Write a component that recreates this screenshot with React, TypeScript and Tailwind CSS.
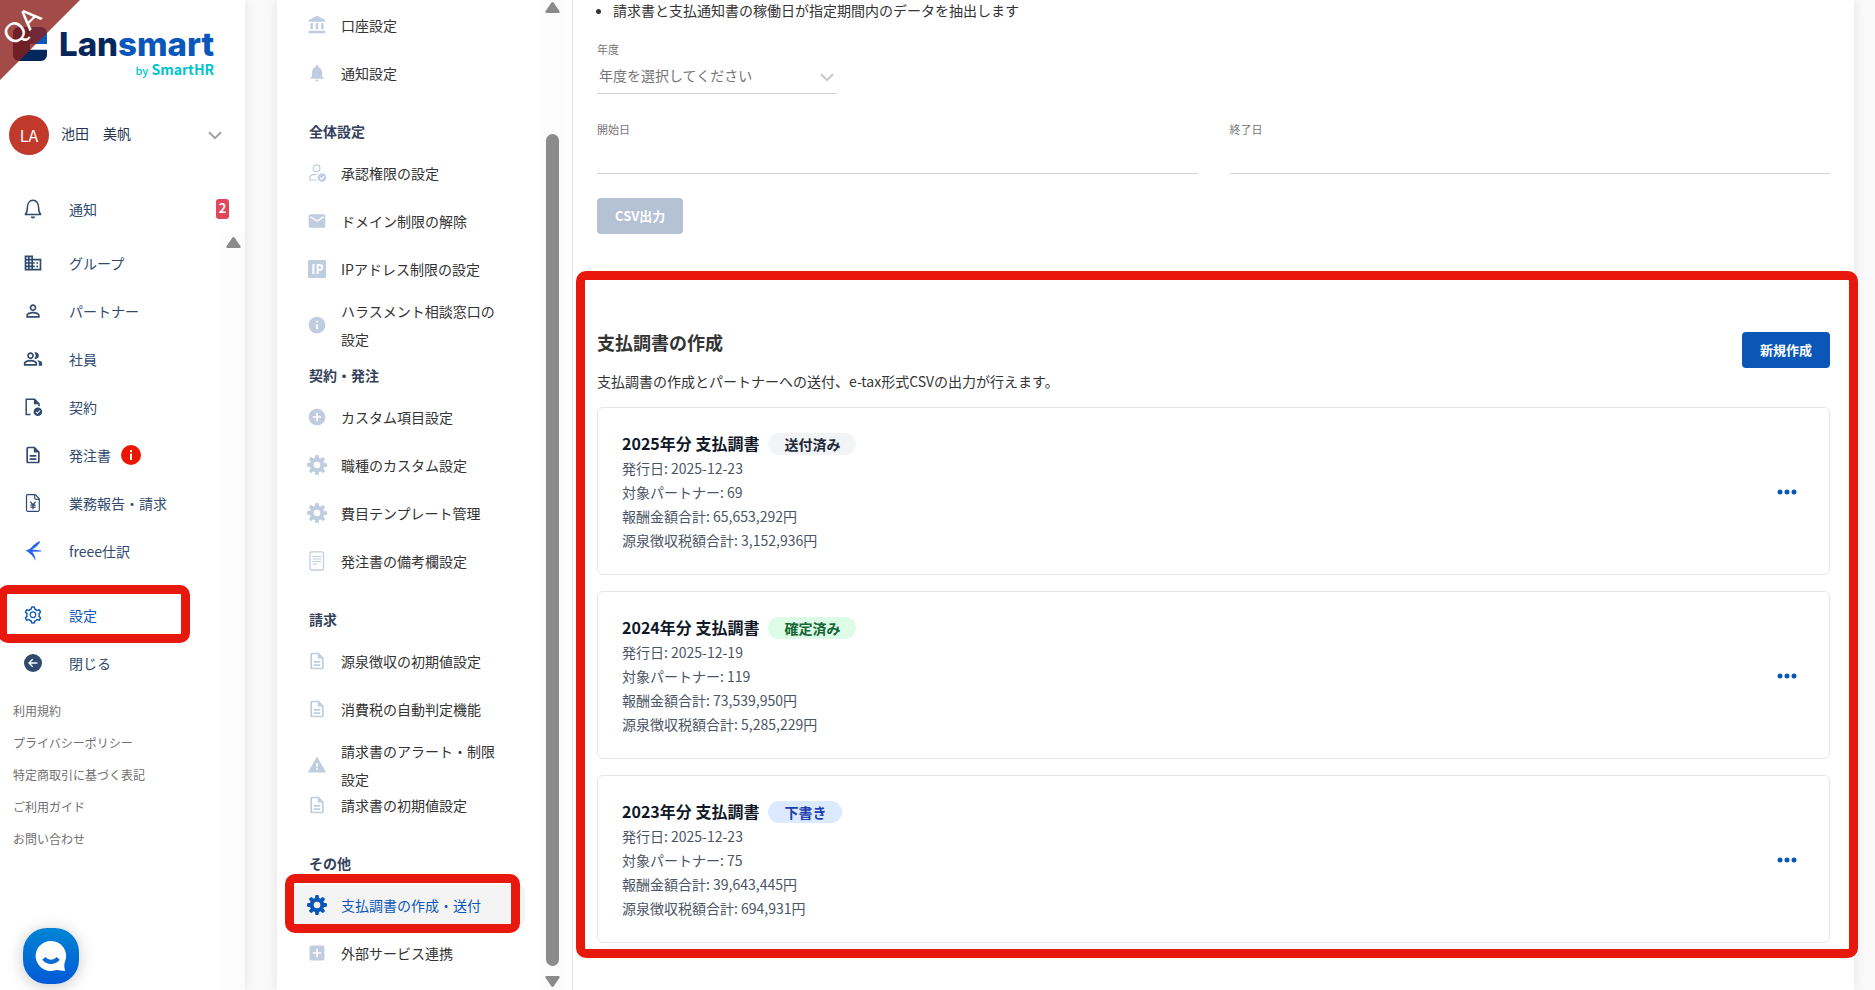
import type { ReactNode } from "react";
import {
  MdAccountBalance,
  MdAddBox,
  MdAddCircle,
  MdDomain,
  MdEmail,
  MdInfo,
  MdNotifications,
  MdOutlineDescription,
  MdOutlinePeopleAlt,
  MdPersonOutline,
  MdWarning,
} from "react-icons/md";
import { AiOutlineSetting } from "react-icons/ai";

/* ---------- icons ---------- */

const BellIcon = () => (
  <svg width="18" height="20" viewBox="0 0 18 20" fill="none">
    <path
      d="M1.3 15.4h15.4C14.8 13.4 14.6 12 14.6 8.4 14.6 3.9 12.2 1.3 9 1.3S3.4 3.9 3.4 8.4c0 3.6-.2 5-2.1 7z"
      stroke="currentColor"
      strokeWidth="1.5"
      strokeLinejoin="round"
    />
    <path d="M6.8 17.4h4.4a2.2 2.1 0 0 1-4.4 0z" fill="currentColor" />
  </svg>
);

const ContractIcon = () => (
  <svg width="20" height="20" viewBox="0 0 20 20" fill="none">
    <path d="M7.6 17.6H3.2V2.2h8.3l4.5 4.6v2.4" stroke="currentColor" strokeWidth="1.5" />
    <path d="M10.9 1.5v5.8h5.8z" fill="currentColor" />
    <circle cx="14.9" cy="14.7" r="4.3" fill="currentColor" />
    <path d="m12.9 14.8 1.5 1.5 2.6-2.8" stroke="#fff" strokeWidth="1.1" />
  </svg>
);

const YenDocIcon = () => (
  <svg width="20" height="20" viewBox="0 0 20 20" fill="none" stroke="currentColor">
    <path d="M4.7 1.7h7.6l4 4.1v11.3a1.2 1.2 0 0 1-1.2 1.2H4.7a1.2 1.2 0 0 1-1.2-1.2V2.9a1.2 1.2 0 0 1 1.2-1.2z" strokeWidth="1.2" />
    <path d="M11.7 1.9v2.9c0 .9.6 1.5 1.5 1.5h3" strokeWidth="1.2" />
    <path d="M7.4 8.6 10 12l2.6-3.4M10 12v4.2M7.4 12.2h5.2M7.4 14.2h5.2" strokeWidth="1.3" />
  </svg>
);

const SwallowIcon = () => (
  <svg width="20" height="22" viewBox="0 0 20 22" fill="#2864f0">
    <path d="M2.500 10.200C6 9.800 7.500 8.600 9 6.800 11 4.300 14 2.200 17.300 1c-.4 2.800-4.200 6.300-8.300 8.500l9.200.9-.2 1.100-8.800.2c1.900 2.700 3.500 5.800 3.300 9.100C10.800 17 7.600 13.200 2.500 10.200z" />
  </svg>
);

const CloseIcon = () => (
  <svg width="18" height="18" viewBox="0 0 18 18" fill="none">
    <circle cx="9" cy="9" r="9" fill="currentColor" />
    <path d="M13.400 9H5.200M8.700 5.300 5 9l3.700 3.700" stroke="#fff" strokeWidth="1.400" />
  </svg>
);

const GearIcon = () => (
  <svg width="20" height="20" viewBox="0 0 20 20" fill="none">
    <circle cx="10" cy="10" r="5.300" stroke="currentColor" strokeWidth="4" />
    {[0, 45, 90, 135].map((angle) => (
      <g key={angle} transform={`rotate(${angle} 10 10)`} fill="currentColor">
        <rect x="8.100" y="0" width="3.800" height="4.500" rx="1.300" />
        <rect x="8.100" y="15.500" width="3.800" height="4.500" rx="1.300" />
      </g>
    ))}
  </svg>
);

const ApproverIcon = () => (
  <svg width="20" height="20" viewBox="0 0 20 20" fill="none">
    <circle cx="9.500" cy="5.300" r="3.400" stroke="currentColor" strokeWidth="1.200" />
    <path d="M9.600 17H2.700v-1.800c0-2.500 3-3.800 6.800-3.800" stroke="currentColor" strokeWidth="1.200" />
    <circle cx="15" cy="14.500" r="4.300" fill="currentColor" />
    <path d="m13.100 14.600 1.500 1.500 2.500-2.900" stroke="#fff" strokeWidth="1.100" />
  </svg>
);

const IpIcon = () => (
  <svg width="18" height="18" viewBox="0 0 18 18">
    <rect width="18" height="18" rx="1.500" fill="currentColor" />
    <rect x="4.400" y="4" width="2" height="10" fill="#fff" />
    <path d="M9.600 14V5h2.200a2.300 2.300 0 0 1 0 4.900H9.600" fill="none" stroke="#fff" strokeWidth="1.900" />
  </svg>
);

const NoteIcon = () => (
  <svg width="16" height="20" viewBox="0 0 16 20" fill="none" stroke="currentColor">
    <rect x="1" y=".8" width="13.500" height="18.200" rx="1.600" strokeWidth="1.300" />
    <path d="M3.600 5.500h8.600M3.600 8h8.600M3.600 10.500h8.600M3.600 13h4.600" strokeWidth="1.100" />
  </svg>
);

const Chevron = ({ className }: { className: string }) => (
  <svg width="14" height="9" viewBox="0 0 14 9" fill="none" className={className}>
    <path d="m1 1.200 6 6 6-6" stroke="currentColor" strokeWidth="2" />
  </svg>
);

const UpArrow = () => (
  <svg width="15" height="11" viewBox="0 0 15 11" fill="#8b8b8b">
    <path d="M6.300.8a1.500 1.500 0 0 1 2.400 0l5.700 8.300c.6.900.1 1.900-1 1.900H1.600c-1.100 0-1.600-1-1-1.900z" />
  </svg>
);

const LogoMark = () => (
  <svg width="34" height="34" viewBox="0 0 34 34">
    <path d="M6 0h22a6 6 0 0 1 6 6v11H17V0z" fill="#0a57bb" />
    <path d="M6 0h11v22.700h17V28a6 6 0 0 1-6 6H6a6 6 0 0 1-6-6V6a6 6 0 0 1 6-6z" fill="#04285c" />
  </svg>
);

const ChatIcon = () => (
  <svg width="32" height="32" viewBox="0 0 32 32">
    <path d="M16 1a15 15 0 1 0 4.500 29.200c2.500-.9 5.600.7 9.700.7-.6-2.600-1.400-4.700-.5-8.400A15 15 0 0 0 16 1z" fill="#fff" />
    <path d="M8.800 18.300c4.200 4.800 10.200 4.800 14.400 0" fill="none" stroke="#0a6cd6" strokeWidth="4.200" />
  </svg>
);

/* ---------- data ---------- */

const mainNav: { label: string; icon: ReactNode; alert?: boolean }[] = [
  { label: "グループ", icon: <MdDomain size={20} /> },
  { label: "パートナー", icon: <MdPersonOutline size={20} /> },
  { label: "社員", icon: <MdOutlinePeopleAlt size={20} /> },
  { label: "契約", icon: <ContractIcon /> },
  { label: "発注書", icon: <MdOutlineDescription size={20} />, alert: true },
  { label: "業務報告・請求", icon: <YenDocIcon /> },
  { label: "freee仕訳", icon: <SwallowIcon /> },
];

const footerLinks = [
  "利用規約",
  "プライバシーポリシー",
  "特定商取引に基づく表記",
  "ご利用ガイド",
  "お問い合わせ",
];

const settingGroups: { title?: string; items: { label: string; icon: ReactNode; active?: boolean }[] }[] = [
  {
    items: [
      { label: "口座設定", icon: <MdAccountBalance size={20} /> },
      { label: "通知設定", icon: <MdNotifications size={20} /> },
    ],
  },
  {
    title: "全体設定",
    items: [
      { label: "承認権限の設定", icon: <ApproverIcon /> },
      { label: "ドメイン制限の解除", icon: <MdEmail size={20} /> },
      { label: "IPアドレス制限の設定", icon: <IpIcon /> },
      { label: "ハラスメント相談窓口の設定", icon: <MdInfo size={20} /> },
    ],
  },
  {
    title: "契約・発注",
    items: [
      { label: "カスタム項目設定", icon: <MdAddCircle size={20} /> },
      { label: "職種のカスタム設定", icon: <GearIcon /> },
      { label: "費目テンプレート管理", icon: <GearIcon /> },
      { label: "発注書の備考欄設定", icon: <NoteIcon /> },
    ],
  },
  {
    title: "請求",
    items: [
      { label: "源泉徴収の初期値設定", icon: <MdOutlineDescription size={20} /> },
      { label: "消費税の自動判定機能", icon: <MdOutlineDescription size={20} /> },
      { label: "請求書のアラート・制限設定", icon: <MdWarning size={20} /> },
      { label: "請求書の初期値設定", icon: <MdOutlineDescription size={20} /> },
    ],
  },
  {
    title: "その他",
    items: [
      { label: "支払調書の作成・送付", icon: <GearIcon />, active: true },
      { label: "外部サービス連携", icon: <MdAddBox size={20} /> },
    ],
  },
];

const reports = [
  {
    year: "2025",
    status: "送付済み",
    tone: "bg-gray-100 text-gray-800",
    issued: "2025-12-23",
    partners: "69",
    total: "65,653,292",
    tax: "3,152,936",
  },
  {
    year: "2024",
    status: "確定済み",
    tone: "bg-[#dcfce7] text-[#166534]",
    issued: "2025-12-19",
    partners: "119",
    total: "73,539,950",
    tax: "5,285,229",
  },
  {
    year: "2023",
    status: "下書き",
    tone: "bg-[#dbeafe] text-[#1e40af]",
    issued: "2025-12-23",
    partners: "75",
    total: "39,643,445",
    tax: "694,931",
  },
];

/* ---------- parts ---------- */

const Frame = ({ className }: { className: string }) => (
  <div aria-hidden="true" className={`pointer-events-none absolute z-10 rounded-[10px] border-[#e8180c] ${className}`} />
);

const NavLink = ({ icon, children, className }: { icon: ReactNode; children: ReactNode; className?: string }) => (
  <a href="#" className={`flex h-12 items-center gap-[26px] pl-[23px] ${className ?? ""}`}>
    <span className="flex w-5 justify-center">{icon}</span>
    <span className="flex items-center gap-[10px]">{children}</span>
  </a>
);

function Sidebar() {
  return (
    <aside className="relative flex w-[245px] shrink-0 flex-col bg-white text-sm text-[#2f4a6e] shadow-[0_0_12px_rgba(0,0,0,0.10)]">
      <div className="pointer-events-none absolute top-0 left-0 z-10 h-20 w-20 bg-[#8b1e1a]/80 [clip-path:polygon(0_0,100%_0,0_100%)]">
        <span className="absolute top-3 left-0 w-11 -rotate-45 text-center font-['Liberation_Sans',sans-serif] text-[28px] leading-7 text-white">
          QA
        </span>
      </div>

      <div className="flex h-[82px] items-start gap-3 pt-[27px] pl-[13px]">
        <LogoMark />
        <div className="flex flex-col items-end">
          <span className="font-['Inter',sans-serif] text-[33px] leading-[34px] font-extrabold text-[#04285c]">
            Lan<span className="text-[#0a57bb]">smart</span>
          </span>
          <span className="text-sm leading-4 font-bold text-[#00c4cc]">
            <span className="text-[11px] font-medium">by</span> SmartHR
          </span>
        </div>
      </div>

      <button type="button" className="mt-[33px] flex h-10 items-center pr-[23px] pl-[9px] text-[#24364f]">
        <span className="flex h-10 w-10 items-center justify-center rounded-full bg-[#c0392b] text-base text-white">LA</span>
        <span className="ml-3 flex-1 pb-1 text-left">池田　美帆</span>
        <Chevron className="text-[#a0a0a0]" />
      </button>

      <div className="mt-[30px] flex h-[47px] items-center pr-4">
        <NavLink icon={<BellIcon />} className="flex-1">
          通知
        </NavLink>
        <span className="flex h-5 w-[13px] items-center justify-center rounded-[3px] bg-[#e0475a] text-[13px] font-bold text-white">2</span>
      </div>

      <div className="flex min-h-0 flex-1">
        <nav className="min-w-0 flex-1 pt-[7px]">
          {mainNav.map((item) => (
            <NavLink key={item.label} icon={item.icon}>
              {item.label}
              {item.alert && (
                <svg width="20" height="20" viewBox="0 0 20 20">
                  <circle cx="10" cy="10" r="10" fill="#ec1500" />
                  <path d="M9 5h2v2H9zM9 8.500h2V15H9z" fill="#fff" />
                </svg>
              )}
            </NavLink>
          ))}
          <div className="relative mt-4">
            <NavLink icon={<AiOutlineSetting size={20} />} className="text-[#0a57b8]">
              設定
            </NavLink>
            <Frame className="-top-[6px] right-8 -bottom-1 -left-[2px] border-[9px]" />
          </div>
          <NavLink icon={<CloseIcon />}>閉じる</NavLink>
          <ul className="pt-2 pl-[13px] text-xs text-[#6f6f6f]">
            {footerLinks.map((label) => (
              <li key={label} className="flex h-8 items-center">
                <a href="#">{label}</a>
              </li>
            ))}
          </ul>
        </nav>
        <div className="flex w-[23px] justify-center bg-[#fcfcfc] pt-[5px]">
          <UpArrow />
        </div>
      </div>

      <button
        type="button"
        aria-label="チャット"
        className="absolute bottom-[6px] left-[23px] flex h-14 w-14 items-center justify-center rounded-3xl bg-linear-to-b from-[#0084d4] to-[#0059d6] shadow-[0_2px_16px_rgba(0,0,0,0.22)]"
      >
        <ChatIcon />
      </button>
    </aside>
  );
}

function SettingsNav() {
  return (
    <>
      <nav className="w-[264px] shrink-0 px-4 pt-px text-sm leading-7 text-[#333]">
        {settingGroups.map((group) => (
          <section key={group.title ?? "top"}>
            {group.title && <h3 className="pt-5 pb-1 pl-4 font-bold text-[#33425a]">{group.title}</h3>}
            <ul>
              {group.items.map((item) => (
                <li key={item.label} className="relative h-12 pt-1">
                  <a
                    href="#"
                    className={`flex min-h-10 items-center gap-[14px] rounded-md pl-[14px] ${
                      item.active ? "bg-[#f4f4f4] text-[#0a57b8]" : ""
                    }`}
                  >
                    <span className={`flex w-5 shrink-0 justify-center ${item.active ? "" : "text-[#c0cde0]"}`}>{item.icon}</span>
                    <span className="w-40">{item.label}</span>
                  </a>
                  {item.active && <Frame className="-top-[7px] right-[5px] -bottom-1 -left-2 border-[9px]" />}
                </li>
              ))}
            </ul>
          </section>
        ))}
      </nav>
      <div aria-hidden="true" className="mr-2 flex w-[23px] shrink-0 flex-col items-center bg-[#fcfcfc] pt-[2px] pb-[3px]">
        <UpArrow />
        <div className="mt-[121px] mb-[10px] w-[13px] flex-1 rounded-full bg-[#8b8b8b]" />
        <div className="rotate-180">
          <UpArrow />
        </div>
      </div>
    </>
  );
}

const DateField = ({ id, label }: { id: string; label: string }) => (
  <div className="flex flex-1 flex-col">
    <label htmlFor={id} className="text-[11px] leading-4 text-[#757575]">
      {label}
    </label>
    <input id={id} type="text" className="h-[37px] border-b border-[#d4d4d4] text-sm outline-none" />
  </div>
);

function ReportCard({ report }: { report: (typeof reports)[number] }) {
  return (
    <li className="flex items-center justify-between rounded-md border border-gray-200 px-6 pt-[23px] pb-[22px]">
      <div className="text-sm leading-6 text-gray-600">
        <div className="flex items-center gap-[9px]">
          <h3 className="text-base leading-[25px] font-bold text-gray-900">{report.year}年分 支払調書</h3>
          <span className={`rounded-full px-4 leading-[22px] font-bold ${report.tone}`}>{report.status}</span>
        </div>
        <p>発行日: {report.issued}</p>
        <p>対象パートナー: {report.partners}</p>
        <p>報酬金額合計: {report.total}円</p>
        <p>源泉徴収税額合計: {report.tax}円</p>
      </div>
      <button type="button" aria-label="メニュー" className="flex h-9 w-9 items-center justify-center">
        <svg width="20" height="6" viewBox="0 0 20 6" fill="#0a57b8">
          <circle cx="3" cy="3" r="2.500" />
          <circle cx="10" cy="3" r="2.500" />
          <circle cx="17" cy="3" r="2.500" />
        </svg>
      </button>
    </li>
  );
}

export default function App() {
  return (
    <div className="flex h-screen overflow-hidden bg-[#fafafa] font-['Noto_Sans_CJK_JP',sans-serif] text-[#333]">
      <Sidebar />
      <div className="mr-[21px] ml-8 flex min-w-0 flex-1 bg-white shadow-[0_0_12px_rgba(0,0,0,0.10)]">
        <SettingsNav />
        <main className="min-w-0 flex-1 border-l border-[#e2e2e2] px-6">
          <ul className="list-disc pl-4 text-sm leading-5">
            <li>請求書と支払通知書の稼働日が指定期間内のデータを抽出します</li>
          </ul>

          <div className="relative mt-[21px] flex w-60 flex-col">
            <label htmlFor="fiscal-year" className="text-[11px] leading-4 text-[#757575]">
              年度
            </label>
            <select
              id="fiscal-year"
              className="h-[37px] appearance-none border-b border-[#d4d4d4] bg-transparent pl-[2px] text-sm text-[#757575] outline-none"
            >
              <option>年度を選択してください</option>
            </select>
            <Chevron className="pointer-events-none absolute right-[3px] bottom-3 text-[#c8c8c8]" />
          </div>

          <div className="mt-[27px] flex gap-8">
            <DateField id="start-date" label="開始日" />
            <DateField id="end-date" label="終了日" />
          </div>

          <button type="button" disabled className="mt-6 block h-9 rounded bg-[#b5c1d4] px-[18px] text-[13px] font-bold text-white">
            CSV出力
          </button>

          <section className="relative pt-[95px]">
            <Frame className="top-[37px] -right-7 -bottom-[15px] -left-[21px] border-[9px]" />
            <div className="flex items-start justify-between">
              <div>
                <h2 className="text-lg leading-[26px] font-bold">支払調書の作成</h2>
                <p className="mt-[14px] text-sm leading-6">支払調書の作成とパートナーへの送付、e-tax形式CSVの出力が行えます。</p>
              </div>
              <button type="button" className="mt-[3px] h-9 rounded bg-[#0a57b8] px-[18px] text-[13px] font-bold text-white">
                新規作成
              </button>
            </div>
            <ul className="mt-[14px] flex flex-col gap-4">
              {reports.map((report) => (
                <ReportCard key={report.year} report={report} />
              ))}
            </ul>
          </section>
        </main>
      </div>
    </div>
  );
}
